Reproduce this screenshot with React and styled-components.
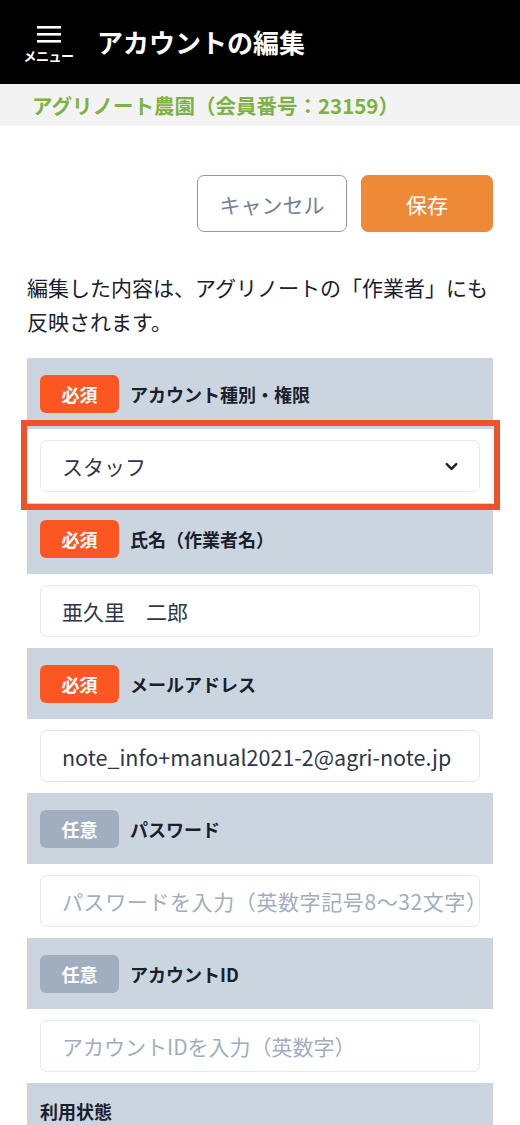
import styled, { createGlobalStyle } from 'styled-components';
import { ChevronDown } from 'lucide-react';

const GlobalStyle = createGlobalStyle`
  html, body {
    margin: 0;
    padding: 0;
    background: #ffffff;
    font-family: "Noto Sans CJK JP", "Noto Sans", sans-serif;
  }
  * { box-sizing: border-box; }
`;

const TopBar = styled.header`
  height: 84px;
  background: #000000;
  display: flex;
  align-items: center;
  padding-left: 22px;
  gap: 22px;
`;

const MenuButton = styled.div`
  width: 53px;
  display: flex;
  flex-direction: column;
  align-items: center;
  color: #ffffff;
  margin-top: 4px;
  & > span {
    font-size: 13px;
    font-weight: 700;
    line-height: 14px;
    margin-top: 5px;
    letter-spacing: -0.5px;
  }
`;

const Title = styled.h1`
  margin: 0;
  color: #ffffff;
  font-size: 26px;
  font-weight: 700;
  line-height: 32px;
`;

const FarmBand = styled.div`
  height: 42px;
  background: #f3f3f3;
  display: flex;
  align-items: center;
  padding-left: 32px;
  color: #7cb342;
  font-size: 20.5px;
  font-weight: 700;
`;

const Main = styled.main`
  padding: 49px 27px 0 27px;
`;

const ButtonRow = styled.div`
  display: flex;
  justify-content: flex-end;
  gap: 14px;
`;

const ActionButton = styled.button`
  height: 57px;
  width: ${p => p.$width}px;
  border-radius: 7px;
  font-family: inherit;
  font-size: 21px;
  border: 1.5px solid ${p => (p.$primary ? '#ee8a37' : '#8c9cb3')};
  background: ${p => (p.$primary ? '#ee8a37' : '#ffffff')};
  color: ${p => (p.$primary ? '#ffffff' : '#718096')};
  padding: 0;
`;

const Note = styled.p`
  margin: 38px 0 20px 0;
  font-size: 21px;
  line-height: 34px;
  color: #1a202c;
`;

const Panel = styled.section`
  display: flex;
  flex-direction: column;
`;

const FieldHead = styled.div`
  background: #cbd5e0;
  display: flex;
  align-items: center;
  gap: 11px;
  padding: ${p => (p.$plain ? '16px 13px' : '17px 13px 16px 13px')};
`;

const Badge = styled.span`
  width: 79px;
  height: 38px;
  border-radius: 6px;
  display: flex;
  align-items: center;
  justify-content: center;
  font-size: 18px;
  font-weight: 700;
  color: #ffffff;
  background: ${p => (p.$required ? '#fc5723' : '#a0aec0')};
`;

const FieldLabel = styled.span`
  font-size: 18px;
  font-weight: 700;
  color: #1a202c;
  line-height: 24px;
`;

const FieldBody = styled.div`
  position: relative;
  padding: 11px 13px;
  background: #ffffff;
`;

const InputBox = styled.div`
  height: 52px;
  border: 1.5px solid #e2e8f0;
  border-radius: 7px;
  display: flex;
  align-items: center;
  justify-content: space-between;
  padding: 0 18px 0 21px;
  font-size: ${p => (p.$latin ? '21.5px' : '21px')};
  letter-spacing: ${p => (p.$wide ? '0.6px' : '0')};
  color: ${p => (p.$placeholder ? '#a0aec0' : '#2d3748')};
  white-space: nowrap;
  overflow: hidden;
`;

const Highlight = styled.div`
  position: absolute;
  top: -9px;
  bottom: -7px;
  left: -6px;
  right: -7px;
  border: 6px solid #ef5128;
  pointer-events: none;
`;

const HamburgerIcon = () => (
  <svg width="26" height="18" viewBox="0 0 26 18">
    <rect x="1" y="0" width="24" height="2.6" fill="#fff" />
    <rect x="1" y="7" width="24" height="2.6" fill="#fff" />
    <rect x="1" y="14" width="24" height="2.6" fill="#fff" />
  </svg>
);

const fields = [
  { label: 'アカウント種別・権限', required: true, value: 'スタッフ', select: true },
  { label: '氏名（作業者名）', required: true, value: '亜久里　二郎' },
  { label: 'メールアドレス', required: true, value: 'note_info+manual2021-2@agri-note.jp', latin: true },
  { label: 'パスワード', required: false, value: 'パスワードを入力（英数字記号8〜32文字）', placeholder: true, wide: true },
  { label: 'アカウントID', required: false, value: 'アカウントIDを入力（英数字）', placeholder: true },
];

const App = () => {
  return (
    <>
      <GlobalStyle />
      <TopBar>
        <MenuButton>
          <HamburgerIcon />
          <span>メニュー</span>
        </MenuButton>
        <Title>アカウントの編集</Title>
      </TopBar>
      <FarmBand>アグリノート農園（会員番号：23159）</FarmBand>
      <Main>
        <ButtonRow>
          <ActionButton $width={150}>キャンセル</ActionButton>
          <ActionButton $width={132} $primary>保存</ActionButton>
        </ButtonRow>
        <Note>編集した内容は、アグリノートの「作業者」にも反映されます。</Note>
        <Panel>
          {fields.map(f => (
            <div key={f.label}>
              <FieldHead>
                <Badge $required={f.required}>{f.required ? '必須' : '任意'}</Badge>
                <FieldLabel>{f.label}</FieldLabel>
              </FieldHead>
              <FieldBody>
                <InputBox $placeholder={f.placeholder} $latin={f.latin} $wide={f.wide}>
                  <span>{f.value}</span>
                  {f.select && <ChevronDown size={19} strokeWidth={3} color="#1a202c" />}
                </InputBox>
                {f.select && <Highlight />}
              </FieldBody>
            </div>
          ))}
          <FieldHead $plain>
            <FieldLabel>利用状態</FieldLabel>
          </FieldHead>
        </Panel>
      </Main>
    </>
  );
};

export default App;
